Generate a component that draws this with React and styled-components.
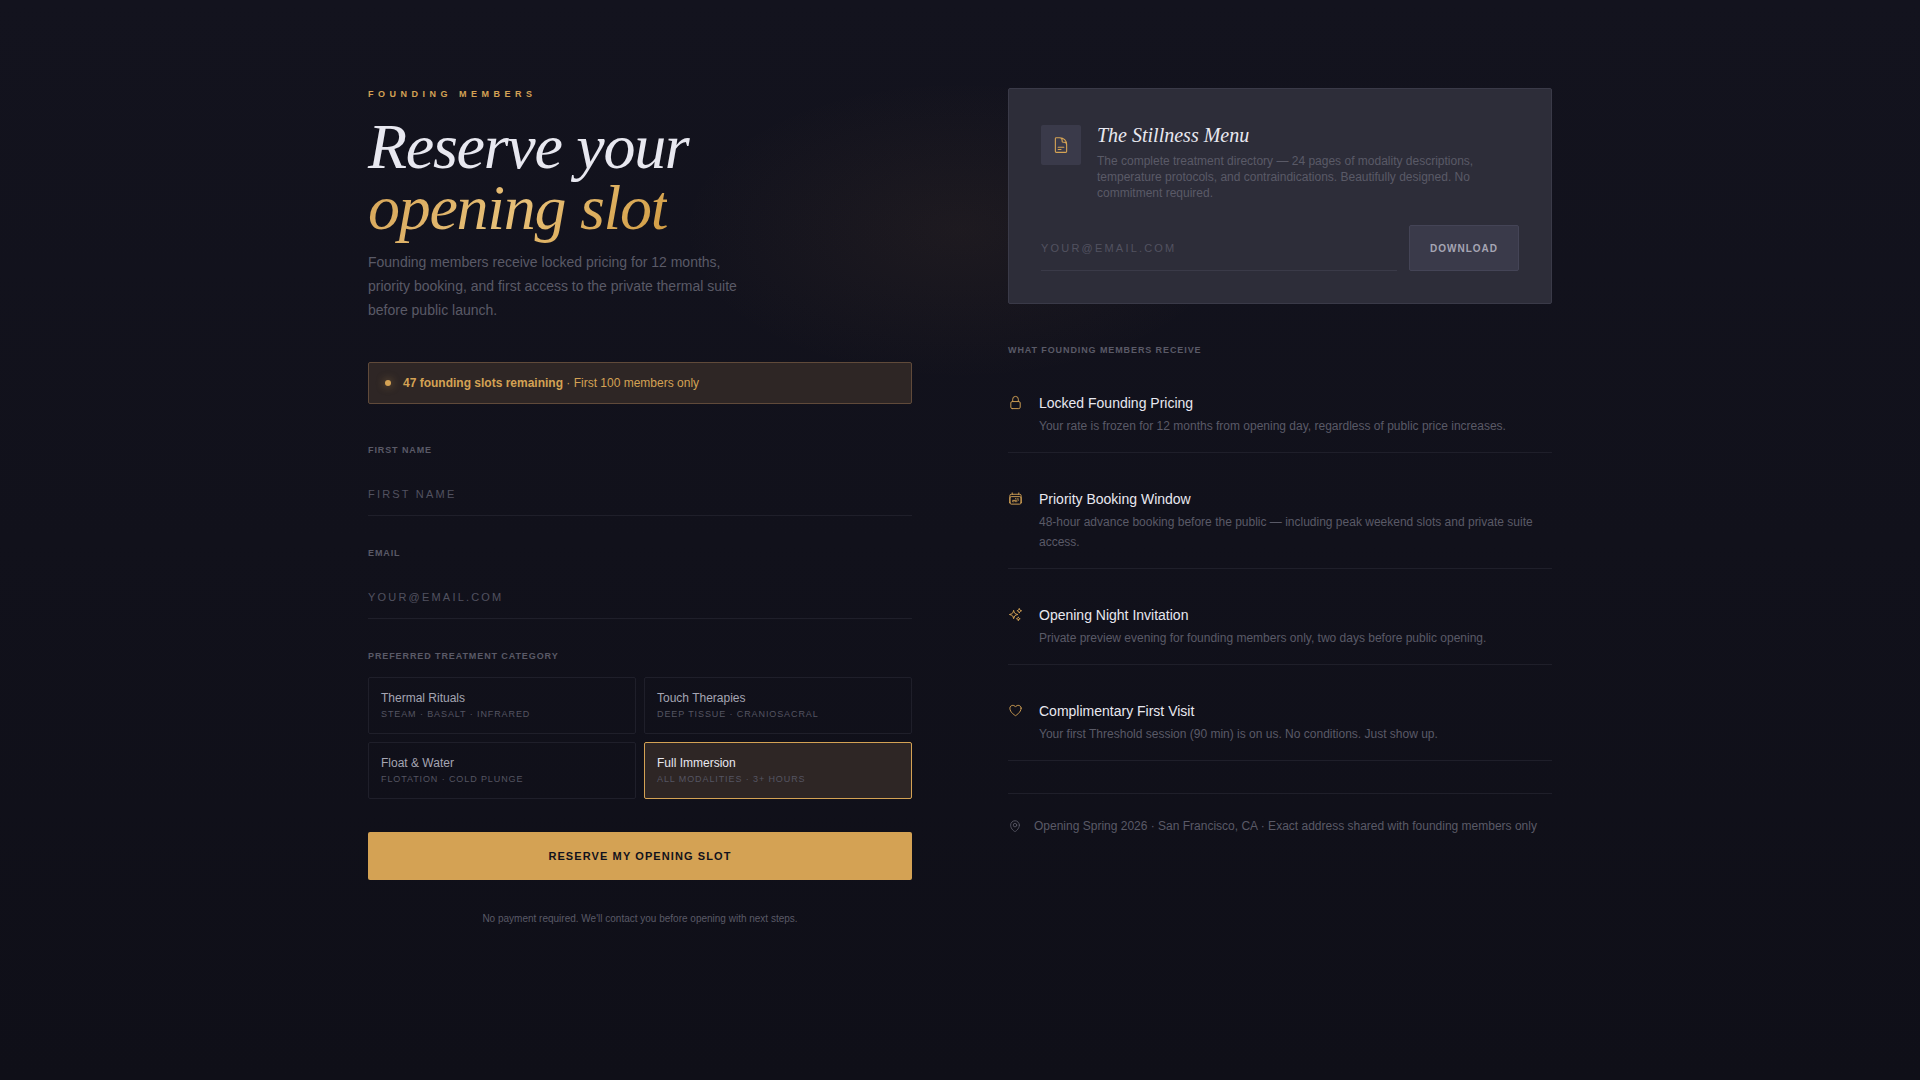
import styled, { createGlobalStyle } from "styled-components";
import React, { useState } from "react";
import {
    HiOutlineDocumentText,
    HiOutlineHeart,
    HiOutlineLockClosed,
    HiOutlineMapPin,
    HiOutlineSparkles,
} from "react-icons/hi2";

const GlobalStyles = createGlobalStyle`
    *, *::before, *::after {
        box-sizing: border-box;
    }
    body {
        margin: 0;
        background-color: #0f0f18;
        color: #e8e8f0;
        font-family: "Liberation Sans", Arial, sans-serif;
    }
    h1, h2, h3, p, ul, fieldset {
        margin: 0;
        padding: 0;
    }
    button, input {
        font-family: inherit;
    }
`;

const PageStyles = styled.main`
    min-height: 100vh;
    padding: 88px 48px;
    background: radial-gradient(ellipse 280px 150px at 50% 230px, rgba(212, 150, 84, 0.06), transparent),
        linear-gradient(180deg, #13131e 0%, #0f0f18 100%);
`;

const Container = styled.div`
    display: grid;
    grid-template-columns: 1fr 1fr;
    gap: 96px;
    max-width: 1184px;
    margin: 0 auto;
    align-items: start;
    @media screen and (max-width: 1023.98px) {
        grid-template-columns: 1fr;
        gap: 48px;
    }
`;

const Column = styled.section`
    display: flex;
    flex-direction: column;
    gap: 40px;
    min-width: 0;
`;

const IntroStyles = styled.header`
    .eyebrow {
        margin-bottom: 16px;
        color: #d4a254;
        font-size: 9px;
        font-weight: 700;
        line-height: 12px;
        letter-spacing: 0.5em;
        text-transform: uppercase;
    }
    .heading {
        margin-bottom: 12px;
        font-family: "Liberation Serif", "Times New Roman", serif;
        font-size: 64px;
        font-style: italic;
        font-weight: 400;
        line-height: 61px;
        letter-spacing: -0.02em;
    }
    .heading span {
        background: linear-gradient(135deg, #d4a254 0%, #e8c078 50%, #d09a40 100%);
        background-clip: text;
        color: transparent;
    }
    .lead {
        max-width: 380px;
        color: #5a5a67;
        font-size: 14px;
        line-height: 24px;
    }
`;

const Notice = styled.div`
    display: flex;
    align-items: center;
    gap: 12px;
    padding: 12px 16px;
    border: 1px solid #604a3a;
    border-radius: 2px;
    background-color: #2e2625;
    color: #d4a254;
    font-size: 12px;
    line-height: 16px;
    &::before {
        content: "";
        width: 6px;
        height: 6px;
        border-radius: 50%;
        background-color: #d4a254;
        box-shadow: 0 0 8px rgba(212, 162, 84, 0.6);
    }
`;

const FormStyles = styled.form`
    display: flex;
    flex-direction: column;
    gap: 33px;
`;

const FieldStack = styled.div`
    display: flex;
    flex-direction: column;
    gap: 31px;
`;

const Field = styled.div`
    display: flex;
    flex-direction: column;
    gap: 16px;
`;

const Caption = styled.span`
    display: block;
    padding: 0;
    color: #5a5a67;
    font-size: 9px;
    font-weight: 700;
    line-height: 13px;
    letter-spacing: 0.1em;
    text-transform: uppercase;
`;

const TextInput = styled.input`
    width: 100%;
    min-width: 0;
    height: ${(props) => (props.$tall ? "46px" : "43px")};
    padding: 0;
    border: 0;
    border-bottom: 1px solid ${(props) => (props.$tall ? "#3a3a48" : "#1f1f2a")};
    border-radius: 0;
    outline: none;
    background: transparent;
    color: #e8e8f0;
    font-size: 11px;
    letter-spacing: 0.2em;
    &::placeholder {
        color: #525260;
        opacity: 1;
        text-transform: uppercase;
    }
    &:focus {
        border-bottom-color: #d4a254;
    }
`;

const Choices = styled.fieldset`
    min-width: 0;
    border: 0;
    .grid {
        display: grid;
        grid-template-columns: 1fr 1fr;
        gap: 8px;
        margin-top: 14px;
    }
`;

const Choice = styled.label`
    display: block;
    padding: 12px;
    border: 1px solid #1f1f2a;
    border-radius: 2px;
    color: #a5a5b3;
    font-size: 12px;
    line-height: 16px;
    cursor: pointer;
    input {
        position: absolute;
        opacity: 0;
    }
    small {
        display: block;
        margin-top: 1px;
        color: #555562;
        font-size: 9px;
        line-height: 14px;
        letter-spacing: 0.1em;
        text-transform: uppercase;
    }
    &:has(input:checked) {
        border-color: #d4a254;
        background-color: #2e2625;
        color: #e8e8f0;
    }
`;

const SubmitButton = styled.button`
    height: 48px;
    border: 0;
    border-radius: 2px;
    background-color: #d4a254;
    color: #12121c;
    font-size: 11px;
    font-weight: 700;
    letter-spacing: 0.1em;
    text-transform: uppercase;
    cursor: pointer;
`;

const Note = styled.p`
    color: #5a5a67;
    font-size: 10px;
    line-height: 12px;
    text-align: center;
`;

const MenuCard = styled.article`
    display: flex;
    flex-direction: column;
    gap: 24px;
    padding: 32px;
    border: 1px solid #3a3a48;
    border-radius: 2px;
    background-color: #2d2d39;
    .card {
        &-header {
            display: flex;
            align-items: flex-start;
            gap: 16px;
        }
        &-icon {
            display: grid;
            place-items: center;
            flex: none;
            width: 40px;
            height: 40px;
            margin-top: 4px;
            border-radius: 2px;
            background-color: #3a3a4a;
            color: #d4a254;
        }
        &-title {
            margin-bottom: 4px;
            font-family: "Liberation Serif", "Times New Roman", serif;
            font-size: 20px;
            font-style: italic;
            font-weight: 400;
            line-height: 28px;
        }
        &-desc {
            max-width: 400px;
            color: #5a5a67;
            font-size: 12px;
            line-height: 16px;
        }
        &-form {
            display: flex;
            gap: 12px;
        }
    }
`;

const DownloadButton = styled.button`
    flex: none;
    height: 46px;
    padding: 0 20px;
    border: 1px solid #444456;
    border-radius: 2px;
    background-color: #3a3a4a;
    color: #a5a5b3;
    font-size: 10px;
    font-weight: 700;
    letter-spacing: 0.1em;
    text-transform: uppercase;
    cursor: pointer;
`;

const BenefitList = styled.ul`
    display: flex;
    flex-direction: column;
    gap: 20px;
    margin-top: 20px;
    list-style: none;
`;

const BenefitItem = styled.li`
    display: flex;
    align-items: flex-start;
    gap: 16px;
    padding: 16px 0;
    border-bottom: 1px solid #1f1f2a;
    svg {
        flex: none;
        margin-top: 2px;
        color: #d4a254;
    }
    h3 {
        margin-bottom: 3px;
        font-size: 14px;
        font-weight: 400;
        line-height: 20px;
    }
    p {
        color: #5a5a67;
        font-size: 12px;
        line-height: 20px;
    }
`;

const Location = styled.footer`
    display: flex;
    align-items: center;
    gap: 12px;
    margin-top: 32px;
    padding-top: 24px;
    border-top: 1px solid #1f1f2a;
    color: #5a5a67;
    font-size: 12px;
    line-height: 16px;
`;

const CalendarIcon = ({ size }) => (
    <svg
        width={size}
        height={size}
        viewBox="0 0 24 24"
        fill="none"
        stroke="currentColor"
        strokeWidth="1.5"
        strokeLinecap="round"
        strokeLinejoin="round"
        aria-hidden="true"
    >
        <path d="M6.75 2.994v2.25m10.5-2.25v2.25m-14.252 13.5V7.491a2.25 2.25 0 0 1 2.25-2.25h13.5a2.25 2.25 0 0 1 2.25 2.25v11.251m-18 0a2.25 2.25 0 0 0 2.25 2.25h13.5a2.25 2.25 0 0 0 2.25-2.25m-18 0v-7.5a2.25 2.25 0 0 1 2.25-2.25h13.5a2.25 2.25 0 0 1 2.25 2.25v7.5m-6.75-6h2.25m-9 2.25h4.5m.002-2.25h.005v.006H12v-.006Zm-.001 4.5h.006v.006h-.006v-.005Zm-2.25.001h.005v.006H9.75v-.006Zm-2.25 0h.005v.005h-.006v-.005Zm6.75-2.247h.005v.005h-.005v-.005Zm0 2.247h.006v.006h-.006v-.006Zm2.25-2.248h.006V15H16.5v-.005Z" />
    </svg>
);

const treatments = [
    { id: "thermal", name: "Thermal Rituals", detail: "Steam · Basalt · Infrared" },
    { id: "touch", name: "Touch Therapies", detail: "Deep Tissue · Craniosacral" },
    { id: "float", name: "Float & Water", detail: "Flotation · Cold Plunge" },
    { id: "full", name: "Full Immersion", detail: "All Modalities · 3+ Hours" },
];

const benefits = [
    {
        icon: HiOutlineLockClosed,
        title: "Locked Founding Pricing",
        text: "Your rate is frozen for 12 months from opening day, regardless of public price increases.",
    },
    {
        icon: CalendarIcon,
        title: "Priority Booking Window",
        text: "48-hour advance booking before the public — including peak weekend slots and private suite access.",
    },
    {
        icon: HiOutlineSparkles,
        title: "Opening Night Invitation",
        text: "Private preview evening for founding members only, two days before public opening.",
    },
    {
        icon: HiOutlineHeart,
        title: "Complimentary First Visit",
        text: "Your first Threshold session (90 min) is on us. No conditions. Just show up.",
    },
];

const ReserveForm = () => {
    const [treatment, setTreatment] = useState("full");
    return (
        <FormStyles onSubmit={(e) => e.preventDefault()}>
            <FieldStack>
                <Field>
                    <Caption as="label" htmlFor="first-name">
                        First Name
                    </Caption>
                    <TextInput id="first-name" type="text" placeholder="First name" />
                </Field>
                <Field>
                    <Caption as="label" htmlFor="email">
                        Email
                    </Caption>
                    <TextInput id="email" type="email" placeholder="your@email.com" />
                </Field>
                <Choices>
                    <Caption as="legend">Preferred Treatment Category</Caption>
                    <div className="grid">
                        {treatments.map((item) => (
                            <Choice key={item.id}>
                                <input
                                    type="radio"
                                    name="treatment"
                                    value={item.id}
                                    checked={treatment === item.id}
                                    onChange={() => setTreatment(item.id)}
                                />
                                {item.name}
                                <small>{item.detail}</small>
                            </Choice>
                        ))}
                    </div>
                </Choices>
            </FieldStack>
            <SubmitButton type="submit">Reserve My Opening Slot</SubmitButton>
            <Note>No payment required. We'll contact you before opening with next steps.</Note>
        </FormStyles>
    );
};

const App = () => {
    return (
        <PageStyles>
            <GlobalStyles />
            <Container>
                <Column>
                    <IntroStyles>
                        <p className="eyebrow">Founding Members</p>
                        <h1 className="heading">
                            Reserve your
                            <br />
                            <span>opening slot</span>
                        </h1>
                        <p className="lead">
                            Founding members receive locked pricing for 12 months, priority booking, and
                            first access to the private thermal suite before public launch.
                        </p>
                    </IntroStyles>
                    <Notice>
                        <span>
                            <strong>47 founding slots remaining</strong> · First 100 members only
                        </span>
                    </Notice>
                    <ReserveForm />
                </Column>
                <Column>
                    <MenuCard>
                        <div className="card-header">
                            <div className="card-icon">
                                <HiOutlineDocumentText size={18} />
                            </div>
                            <div>
                                <h2 className="card-title">The Stillness Menu</h2>
                                <p className="card-desc">
                                    The complete treatment directory — 24 pages of modality descriptions,
                                    temperature protocols, and contraindications. Beautifully designed. No
                                    commitment required.
                                </p>
                            </div>
                        </div>
                        <form className="card-form" onSubmit={(e) => e.preventDefault()}>
                            <TextInput
                                $tall
                                type="email"
                                placeholder="your@email.com"
                                aria-label="Email for the menu"
                            />
                            <DownloadButton type="submit">Download</DownloadButton>
                        </form>
                    </MenuCard>
                    <div>
                        <Caption as="h2">What Founding Members Receive</Caption>
                        <BenefitList>
                            {benefits.map(({ icon: Icon, title, text }) => (
                                <BenefitItem key={title}>
                                    <Icon size={15} />
                                    <div>
                                        <h3>{title}</h3>
                                        <p>{text}</p>
                                    </div>
                                </BenefitItem>
                            ))}
                        </BenefitList>
                        <Location>
                            <HiOutlineMapPin size={14} />
                            Opening Spring 2026 · San Francisco, CA · Exact address shared with founding
                            members only
                        </Location>
                    </div>
                </Column>
            </Container>
        </PageStyles>
    );
};

export default App;
